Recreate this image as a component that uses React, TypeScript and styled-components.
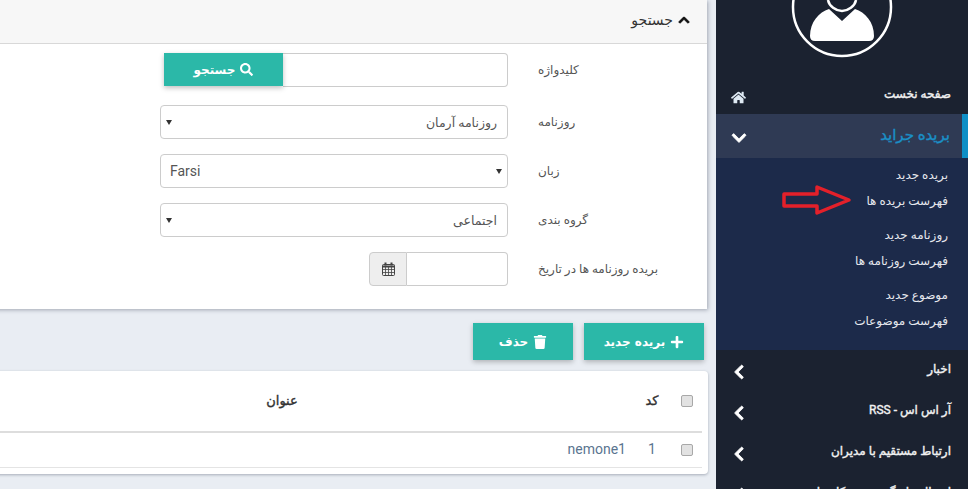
import styled, { createGlobalStyle } from 'styled-components'
import { FaHome, FaChevronDown, FaChevronLeft, FaChevronUp, FaSearch, FaTrash, FaPlus } from 'react-icons/fa'

const GlobalStyle = createGlobalStyle`
  html, body { margin: 0; padding: 0; height: 100%; overflow: hidden; }
  body { background: #e9edf3; font-family: "Roboto", "DejaVu Sans", sans-serif; }
  * { box-sizing: border-box; }
`

const Page = styled.div`
  display: flex;
  width: 968px;
  height: 489px;
  overflow: hidden;
`

const Main = styled.main`
  width: 716px;
  flex: none;
  direction: rtl;
  padding-right: 9px;
`

const Panel = styled.section`
  width: 776px;
  height: 309px;
  background: #fff;
  box-shadow: 1px 1px 4px rgba(70, 80, 100, 0.45);
`

const PanelHeader = styled.div`
  display: flex;
  align-items: center;
  gap: 5px;
  height: 44px;
  padding: 0 17px 4px;
  background: #f7f7f7;
  border-bottom: 1px solid #d8d8d8;
  font-size: 14px;
  color: #333;
  svg { font-size: 12px; color: #111; stroke: currentColor; stroke-width: 40; }
`

const Form = styled.div`
  display: flex;
  flex-direction: column;
  gap: 15px;
  padding-top: 9px;
`

const FormRow = styled.div`
  display: grid;
  grid-template-columns: 169px 348px;
  column-gap: 30px;
  align-items: center;
  height: 34px;
  &:first-child { margin-bottom: 3px; }
`

const Label = styled.label`
  font-size: 12px;
  color: #555;
  text-align: left;
`

const KeywordGroup = styled.div`
  display: flex;
  height: 34px;
`

const KeywordInput = styled.input`
  width: 225px;
  height: 34px;
  background: #fff;
  border: 1px solid #ccc;
  border-left: 0;
  border-radius: 0 4px 4px 0;
  outline: 0;
`

const SearchButton = styled.button`
  display: flex;
  align-items: center;
  justify-content: center;
  gap: 5px;
  width: 119px;
  height: 33px;
  border: 0;
  background: #2bb8a8;
  color: #fff;
  font: 700 12px "DejaVu Sans", sans-serif;
  box-shadow: 0 2px 5px rgba(0, 0, 0, 0.25);
  svg { font-size: 13px; }
`

const SelectBox = styled.div<{ $ltr?: boolean }>`
  position: relative;
  &::after {
    content: '';
    position: absolute;
    top: 15px;
    ${(props) => (props.$ltr ? 'right' : 'left')}: 6px;
    border-top: 5px solid #333;
    border-left: 3px solid transparent;
    border-right: 3px solid transparent;
  }
`

const Select = styled.select<{ $ltr?: boolean }>`
  appearance: none;
  width: 100%;
  height: 34px;
  padding: 0 ${(props) => (props.$ltr ? 9 : 10)}px;
  background: #fff;
  border: 1px solid #ccc;
  border-radius: 4px;
  color: #555;
  font: ${(props) => (props.$ltr ? 14 : 12.5)}px "Roboto", "DejaVu Sans", sans-serif;
  direction: ${(props) => (props.$ltr ? 'ltr' : 'rtl')};
`

const DateGroup = styled.div`
  display: flex;
  justify-content: flex-start;
`

const DateInput = styled.input`
  width: 101px;
  height: 34px;
  border: 1px solid #ccc;
  border-left: 0;
  border-radius: 0 4px 4px 0;
  outline: 0;
`

const DateAddon = styled.span`
  display: flex;
  align-items: center;
  justify-content: center;
  width: 38px;
  height: 34px;
  background: #eee;
  border: 1px solid #ccc;
  border-radius: 4px 0 0 4px;
  color: #444;
`

const Actions = styled.div`
  display: flex;
  gap: 11px;
  padding: 14px 3px 11px 0;
`

const ActionButton = styled.button<{ $width: number }>`
  display: flex;
  align-items: center;
  justify-content: center;
  gap: 5px;
  width: ${(props) => props.$width}px;
  height: 37px;
  border: 0;
  background: #2bb8a8;
  color: #fff;
  font: 700 12px "DejaVu Sans", sans-serif;
  box-shadow: 0 2px 5px rgba(0, 0, 0, 0.25);
  svg { font-size: 14px; }
`

const TableCard = styled.section`
  width: 776px;
  height: 103px;
  margin-right: -1px;
  padding-right: 6px;
  background: #fff;
  border-radius: 4px;
  box-shadow: 0 1px 3px rgba(70, 80, 100, 0.4);
`

const Table = styled.table`
  width: 100%;
  border-collapse: separate;
  border-spacing: 0;
  table-layout: fixed;
`

const HeadCell = styled.th<{ $width?: number }>`
  width: ${(props) => (props.$width ? `${props.$width}px` : 'auto')};
  height: 62px;
  padding: 0 0 2px;
  border-bottom: 2px solid #ddd;
  font-size: 13px;
  font-weight: 400;
  color: #333;
  text-align: center;
  -webkit-text-stroke: 0.4px #333;
`

const BodyCell = styled.td<{ $align?: string }>`
  height: 35px;
  padding: 0 6px 2px;
  border-bottom: 1px solid #e4e4e4;
  font-size: 14px;
  color: #5a7590;
  text-align: ${(props) => props.$align || 'center'};
`

const CheckBox = styled.input.attrs({ type: 'checkbox' })`
  appearance: none;
  width: 12px;
  height: 12px;
  margin: 0;
  vertical-align: middle;
  background: #e2e2e2;
  border: 1px solid #a8a8a8;
  border-radius: 2px;
`

const Sidebar = styled.aside`
  position: relative;
  width: 252px;
  flex: none;
  direction: rtl;
  background: #1b2230;
  color: #fff;
`

const Avatar = styled.div`
  display: flex;
  justify-content: center;
  height: 76px;
`

const MenuItem = styled.div<{ $open?: boolean; $height?: number }>`
  display: flex;
  align-items: center;
  justify-content: space-between;
  height: ${(props) => props.$height || 41}px;
  padding: ${(props) => (props.$open ? '0 12px 0 15px' : '0 17px 0 15px')};
  font-size: ${(props) => (props.$open ? 15 : 12)}px;
  color: ${(props) => (props.$open ? '#1b8fc6' : '#f1f1f1')};
  background: ${(props) => (props.$open ? '#2f3a54' : 'transparent')};
  border-right: ${(props) => (props.$open ? '6px solid #0f8fc6' : '0')};
  -webkit-text-stroke: 0.4px currentColor;
  span { margin-bottom: 3px; }
  svg { font-size: 16px; color: #fff; margin-top: 3px; stroke: currentColor; stroke-width: 30; }
`

const HomeIcon = styled(FaHome)`
  && { font-size: 15px; color: #dfeaf4; stroke-width: 0; margin-top: 5px; }
`

const SubMenu = styled.div`
  height: 192px;
  padding: 4px 20px 0 0;
  background: #1c2a4a;
`

const SubGroup = styled.div`
  display: flex;
  flex-direction: column;
  margin-bottom: 8px;
`

const SubItem = styled.a`
  height: 26px;
  line-height: 26px;
  font-size: 12px;
  color: #e6e8ee;
`

const RedArrow = styled.svg`
  position: absolute;
  left: 65px;
  top: 184px;
`

const App = () => (
  <Page>
    <GlobalStyle />
    <Main>
      <Panel>
        <PanelHeader>
          <FaChevronUp />
          <span>جستجو</span>
        </PanelHeader>
        <Form>
          <FormRow>
            <Label>کلیدواژه</Label>
            <KeywordGroup>
              <KeywordInput />
              <SearchButton>
                <FaSearch />
                <span>جستجو</span>
              </SearchButton>
            </KeywordGroup>
          </FormRow>
          <FormRow>
            <Label>روزنامه</Label>
            <SelectBox>
              <Select defaultValue="arman">
                <option value="arman">روزنامه آرمان</option>
              </Select>
            </SelectBox>
          </FormRow>
          <FormRow>
            <Label>زبان</Label>
            <SelectBox $ltr>
              <Select $ltr defaultValue="fa">
                <option value="fa">Farsi</option>
              </Select>
            </SelectBox>
          </FormRow>
          <FormRow>
            <Label>گروه بندی</Label>
            <SelectBox>
              <Select defaultValue="social">
                <option value="social">اجتماعی</option>
              </Select>
            </SelectBox>
          </FormRow>
          <FormRow>
            <Label>بریده روزنامه ها در تاریخ</Label>
            <DateGroup>
              <DateInput />
              <DateAddon>
                <svg width="13" height="14" viewBox="0 0 13 14" fill="none" stroke="#444">
                  <path d="M3.5 0.5v3M9.5 0.5v3" strokeWidth="2" />
                  <rect x="0.5" y="2.5" width="12" height="11" rx="1" />
                  <path d="M0.5 4.5h12" strokeWidth="2" />
                  <path d="M0.5 7.5h12M0.5 10.5h12M3.5 5v8M6.5 5v8M9.5 5v8" strokeWidth="0.8" />
                </svg>
              </DateAddon>
            </DateGroup>
          </FormRow>
        </Form>
      </Panel>
      <Actions>
        <ActionButton $width={120}>
          <FaPlus />
          <span>بریده جدید</span>
        </ActionButton>
        <ActionButton $width={100}>
          <FaTrash />
          <span>حذف</span>
        </ActionButton>
      </Actions>
      <TableCard>
        <Table>
          <thead>
            <tr>
              <HeadCell $width={30}>
                <CheckBox />
              </HeadCell>
              <HeadCell $width={40}>کد</HeadCell>
              <HeadCell>عنوان</HeadCell>
            </tr>
          </thead>
          <tbody>
            <tr>
              <BodyCell>
                <CheckBox />
              </BodyCell>
              <BodyCell>1</BodyCell>
              <BodyCell $align="right">nemone1</BodyCell>
            </tr>
          </tbody>
        </Table>
      </TableCard>
    </Main>
    <Sidebar>
      <Avatar>
        <svg width="102" height="58" viewBox="0 0 102 58">
          <circle cx="51" cy="7" r="49" fill="none" stroke="#fff" strokeWidth="2.5" />
          <path d="M19 36C19 22 28 12 38 9L51 21L64 9C74 12 83 22 83 36Q83 41 78 41H24Q19 41 19 36Z" fill="#fff" />
          <path d="M37 0c1 6 8 11 14 11s13-5 14-11" fill="none" stroke="#fff" strokeWidth="2.5" />
        </svg>
      </Avatar>
      <MenuItem $height={38}>
        <span>صفحه نخست</span>
        <HomeIcon />
      </MenuItem>
      <MenuItem $open $height={44}>
        <span>بریده جراید</span>
        <FaChevronDown />
      </MenuItem>
      <SubMenu>
        <SubGroup>
          <SubItem>بریده جدید</SubItem>
          <SubItem>فهرست بریده ها</SubItem>
        </SubGroup>
        <SubGroup>
          <SubItem>روزنامه جدید</SubItem>
          <SubItem>فهرست روزنامه ها</SubItem>
        </SubGroup>
        <SubGroup>
          <SubItem>موضوع جدید</SubItem>
          <SubItem>فهرست موضوعات</SubItem>
        </SubGroup>
      </SubMenu>
      <MenuItem>
        <span>اخبار</span>
        <FaChevronLeft />
      </MenuItem>
      <MenuItem>
        <span>آر اس اس - RSS</span>
        <FaChevronLeft />
      </MenuItem>
      <MenuItem>
        <span>ارتباط مستقیم با مدیران</span>
        <FaChevronLeft />
      </MenuItem>
      <MenuItem>
        <span>ارسال پیام گروهی به کاربران</span>
        <FaChevronLeft />
      </MenuItem>
      <RedArrow width="72" height="32" viewBox="0 0 72 32">
        <path d="M3 10h33V3l32 13-32 13v-7H3z" fill="none" stroke="#e3202a" strokeWidth="3.5" strokeLinejoin="round" />
      </RedArrow>
    </Sidebar>
  </Page>
)

export default App
